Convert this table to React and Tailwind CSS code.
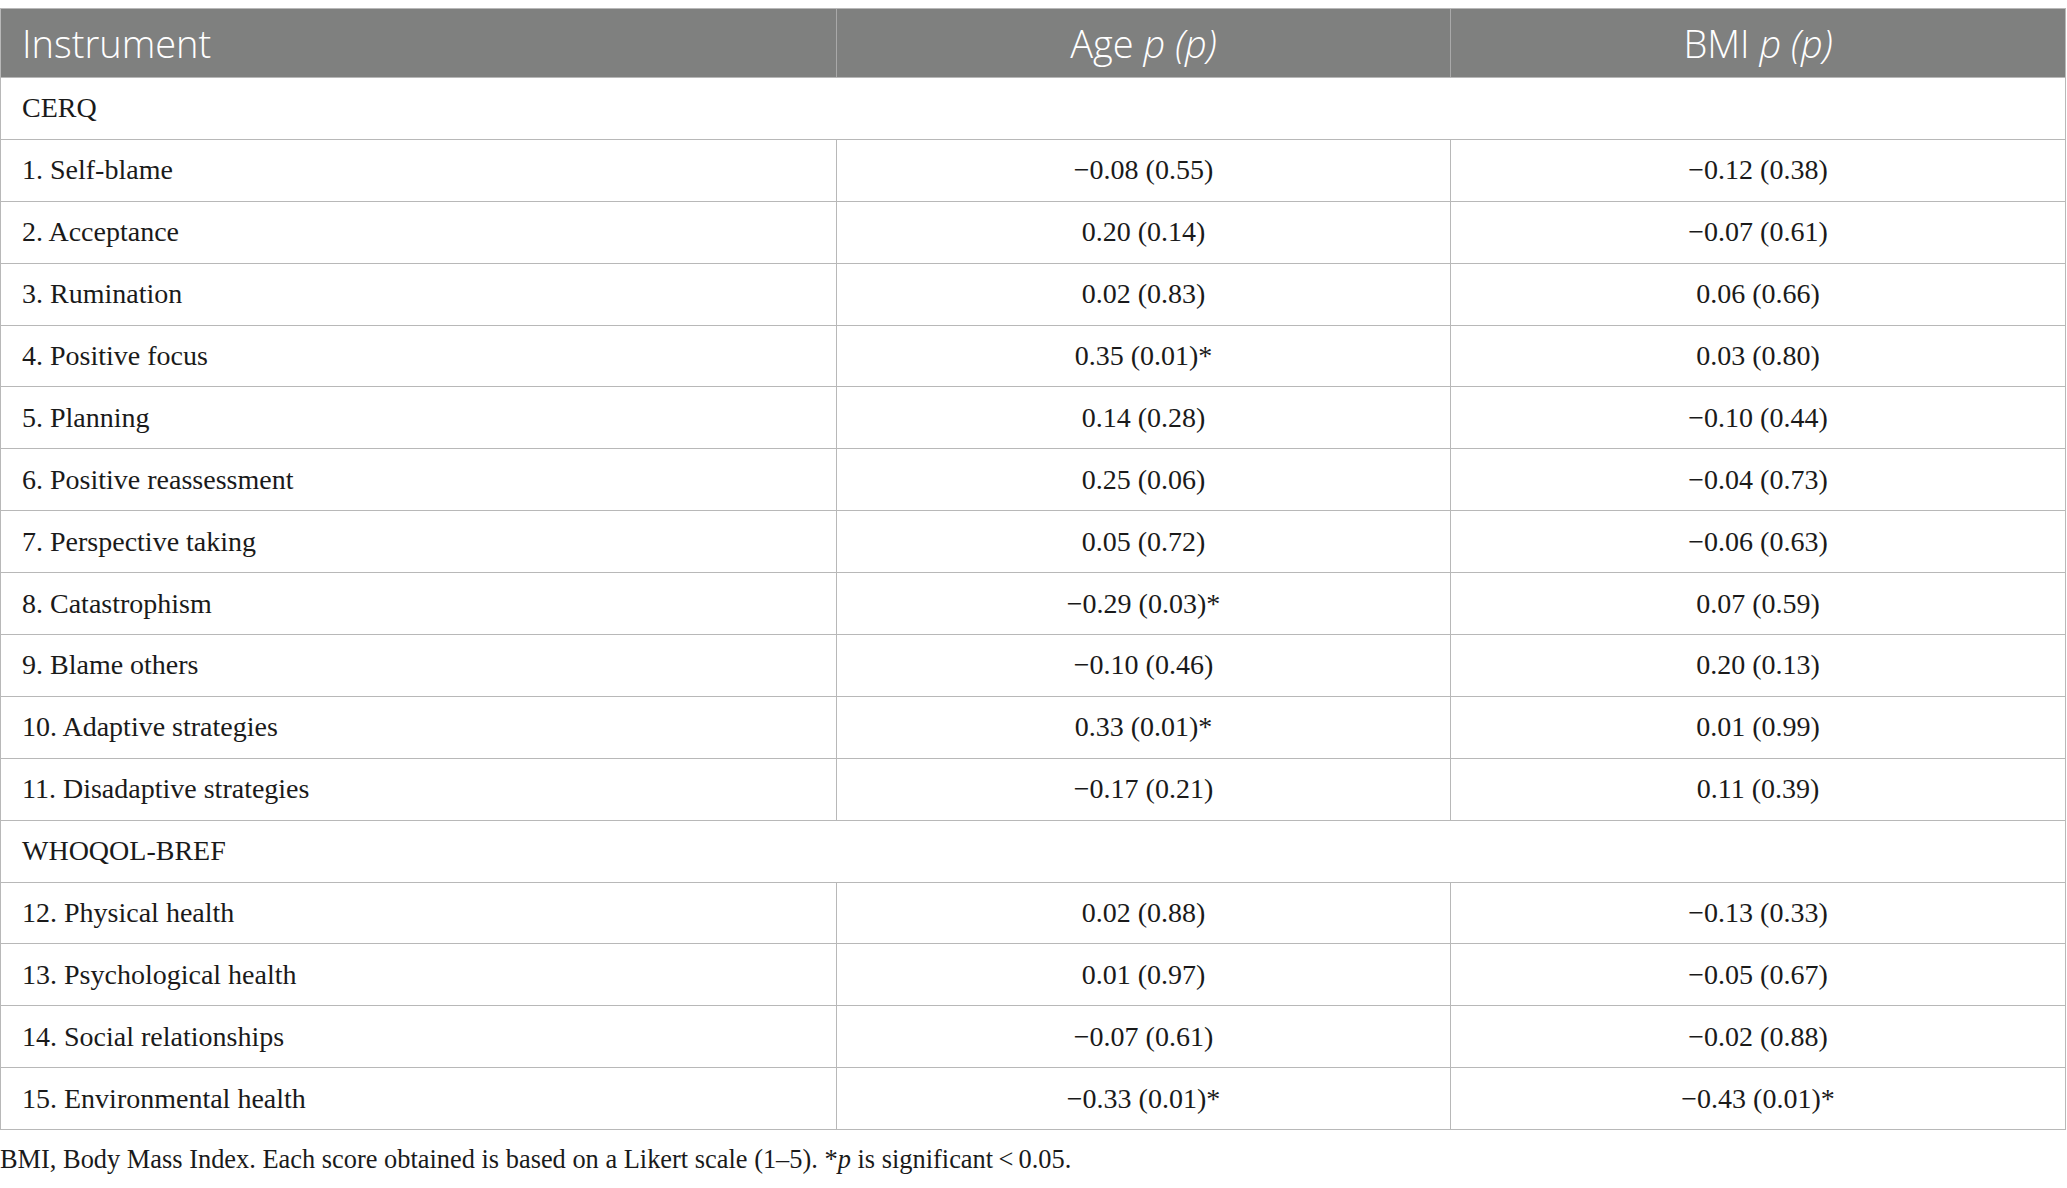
const sections = [
  {
    title: 'CERQ',
    rows: [
      ['1. Self-blame', '\u22120.08 (0.55)', '\u22120.12 (0.38)'],
      ['2. Acceptance', '0.20 (0.14)', '\u22120.07 (0.61)'],
      ['3. Rumination', '0.02 (0.83)', '0.06 (0.66)'],
      ['4. Positive focus', '0.35 (0.01)*', '0.03 (0.80)'],
      ['5. Planning', '0.14 (0.28)', '\u22120.10 (0.44)'],
      ['6. Positive reassessment', '0.25 (0.06)', '\u22120.04 (0.73)'],
      ['7. Perspective taking', '0.05 (0.72)', '\u22120.06 (0.63)'],
      ['8. Catastrophism', '\u22120.29 (0.03)*', '0.07 (0.59)'],
      ['9. Blame others', '\u22120.10 (0.46)', '0.20 (0.13)'],
      ['10. Adaptive strategies', '0.33 (0.01)*', '0.01 (0.99)'],
      ['11. Disadaptive strategies', '\u22120.17 (0.21)', '0.11 (0.39)'],
    ],
  },
  {
    title: 'WHOQOL-BREF',
    rows: [
      ['12. Physical health', '0.02 (0.88)', '\u22120.13 (0.33)'],
      ['13. Psychological health', '0.01 (0.97)', '\u22120.05 (0.67)'],
      ['14. Social relationships', '\u22120.07 (0.61)', '\u22120.02 (0.88)'],
      ['15. Environmental health', '\u22120.33 (0.01)*', '\u22120.43 (0.01)*'],
    ],
  },
]

const serif = "font-['Liberation_Serif',serif]"

const Row = ({ cells }) => (
  <div className={`flex h-[61.9px] border-b border-[#b8b8b8] text-[28px] text-[#1a1a1a] ${serif}`}>
    <div className="w-[836px] flex items-center pl-[21px] border-r border-[#b8b8b8]">{cells[0]}</div>
    <div className="w-[614px] flex items-center justify-center border-r border-[#b8b8b8]">{cells[1]}</div>
    <div className="flex-1 flex items-center justify-center">{cells[2]}</div>
  </div>
)

const App = () => {
  return (
    <div className="bg-white w-[2067px] h-[1188px] pt-[8px]">
      <div className="w-[2066px] border border-[#b8b8b8] border-b-0">
        <div className="flex h-[69px] bg-[#7f807f] border-b border-[#b8b8b8] text-white text-[38px] font-['Open_Sans',sans-serif] font-light">
          <div className="w-[836px] flex items-center pl-[21px] border-r border-[#a9a9a9]">Instrument</div>
          <div className="w-[614px] flex items-center justify-center border-r border-[#a9a9a9]">
            Age&nbsp;<i>p</i>&nbsp;<i>(p)</i>
          </div>
          <div className="flex-1 flex items-center justify-center">
            BMI&nbsp;<i>p</i>&nbsp;<i>(p)</i>
          </div>
        </div>
        {sections.map((s) => (
          <div key={s.title}>
            <div className={`flex items-center h-[61.9px] pl-[21px] border-b border-[#b8b8b8] text-[28px] text-[#1a1a1a] ${serif}`}>
              {s.title}
            </div>
            {s.rows.map((r) => (
              <Row key={r[0]} cells={r} />
            ))}
          </div>
        ))}
      </div>
      <p className={`mt-[14px] leading-[30px] text-[26.4px] text-[#1a1a1a] ${serif}`}>
        BMI, Body Mass Index. Each score obtained is based on a Likert scale (1–5). *<i>p</i> is significant{'\u2009<\u2009'}0.05.
      </p>
    </div>
  )
}

export default App
